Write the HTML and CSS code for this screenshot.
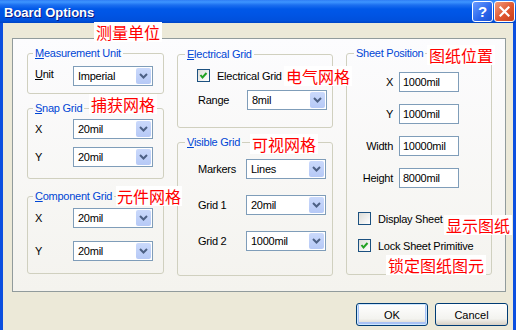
FILE: index.html
```html
<!DOCTYPE html>
<html lang="en">
<head>
	<meta charset="UTF-8">
	<meta name="viewport" content="width=device-width, initial-scale=1.0">
	<title>Board Options</title>
	<link rel="stylesheet" href="styles.css">
</head>
<body>
	<div class="window">
		<div class="titlebar">
			<span class="title">Board Options</span>
			<div class="title-btns">
				<span class="tbtn help">?</span>
				<span class="tbtn close">
					<svg width="11" height="11" viewBox="0 0 11 11"><path d="M1.5 1.5 L9.5 9.5 M9.5 1.5 L1.5 9.5" stroke="#fff" stroke-width="2.2" stroke-linecap="square"/></svg>
				</span>
			</div>
		</div>

		<div class="client">
			<div class="panel">
				<!-- left column -->
				<div class="col">
					<fieldset class="grp grp-unit">
						<legend><u>M</u>easurement Unit</legend>
						<div class="rows rows-left">
							<div class="row row-unit"><label><u>U</u>nit</label><div class="combo"><span class="val">Imperial</span><span class="drop"><svg width="9" height="6" viewBox="0 0 9 6"><path d="M1 1 L4.5 4.5 L8 1" fill="none" stroke="#4D6185" stroke-width="2"/></svg></span></div></div>
						</div>
					</fieldset>

					<fieldset class="grp grp-snap">
						<legend><u>S</u>nap Grid</legend>
						<div class="rows rows-left">
							<div class="row"><label>X</label><div class="combo"><span class="val">20mil</span><span class="drop"><svg width="9" height="6" viewBox="0 0 9 6"><path d="M1 1 L4.5 4.5 L8 1" fill="none" stroke="#4D6185" stroke-width="2"/></svg></span></div></div>
							<div class="row"><label>Y</label><div class="combo"><span class="val">20mil</span><span class="drop"><svg width="9" height="6" viewBox="0 0 9 6"><path d="M1 1 L4.5 4.5 L8 1" fill="none" stroke="#4D6185" stroke-width="2"/></svg></span></div></div>
						</div>
					</fieldset>

					<fieldset class="grp grp-comp">
						<legend><u>C</u>omponent Grid</legend>
						<div class="rows rows-left">
							<div class="row"><label>X</label><div class="combo"><span class="val">20mil</span><span class="drop"><svg width="9" height="6" viewBox="0 0 9 6"><path d="M1 1 L4.5 4.5 L8 1" fill="none" stroke="#4D6185" stroke-width="2"/></svg></span></div></div>
							<div class="row"><label>Y</label><div class="combo"><span class="val">20mil</span><span class="drop"><svg width="9" height="6" viewBox="0 0 9 6"><path d="M1 1 L4.5 4.5 L8 1" fill="none" stroke="#4D6185" stroke-width="2"/></svg></span></div></div>
						</div>
					</fieldset>
				</div>

				<!-- middle column -->
				<div class="col">
					<fieldset class="grp grp-elec">
						<legend><u>E</u>lectrical Grid</legend>
						<div class="rows rows-elec">
							<div class="check-row"><span class="chk"><svg width="11" height="11" viewBox="0 0 11 11"><path d="M2.5 5 L4.5 7.5 L8.5 3" fill="none" stroke="#21A121" stroke-width="2"/></svg></span>Electrical Grid</div>
							<div class="row"><label>Range</label><div class="combo"><span class="val">8mil</span><span class="drop"><svg width="9" height="6" viewBox="0 0 9 6"><path d="M1 1 L4.5 4.5 L8 1" fill="none" stroke="#4D6185" stroke-width="2"/></svg></span></div></div>
						</div>
					</fieldset>

					<fieldset class="grp grp-vis">
						<legend><u>V</u>isible Grid</legend>
						<div class="rows rows-vis">
							<div class="row"><label>Markers</label><div class="combo"><span class="val">Lines</span><span class="drop"><svg width="9" height="6" viewBox="0 0 9 6"><path d="M1 1 L4.5 4.5 L8 1" fill="none" stroke="#4D6185" stroke-width="2"/></svg></span></div></div>
							<div class="row"><label>Grid 1</label><div class="combo"><span class="val">20mil</span><span class="drop"><svg width="9" height="6" viewBox="0 0 9 6"><path d="M1 1 L4.5 4.5 L8 1" fill="none" stroke="#4D6185" stroke-width="2"/></svg></span></div></div>
							<div class="row"><label>Grid 2</label><div class="combo"><span class="val">1000mil</span><span class="drop"><svg width="9" height="6" viewBox="0 0 9 6"><path d="M1 1 L4.5 4.5 L8 1" fill="none" stroke="#4D6185" stroke-width="2"/></svg></span></div></div>
						</div>
					</fieldset>
				</div>

				<!-- right column -->
				<div class="col">
					<fieldset class="grp grp-sheet">
						<legend>Sheet Position</legend>
						<div class="rows rows-sheet">
							<div class="row"><label>X</label><span class="edit">1000mil</span></div>
							<div class="row"><label>Y</label><span class="edit">1000mil</span></div>
							<div class="row"><label>Width</label><span class="edit">10000mil</span></div>
							<div class="row"><label>Height</label><span class="edit">8000mil</span></div>
						</div>
						<div class="checks">
							<div class="check-row"><span class="chk"></span>Display Sheet</div>
							<div class="check-row"><span class="chk"><svg width="11" height="11" viewBox="0 0 11 11"><path d="M2.5 5 L4.5 7.5 L8.5 3" fill="none" stroke="#21A121" stroke-width="2"/></svg></span>Lock Sheet Primitive</div>
						</div>
					</fieldset>
				</div>
			</div>

			<div class="buttons">
				<button class="btn btn-default">OK</button>
				<button class="btn">Cancel</button>
			</div>
		</div>

		<!-- 주석 라벨 -->
		<span class="note n-unit">测量单位</span>
		<span class="note n-snap">捕获网格</span>
		<span class="note n-comp">元件网格</span>
		<span class="note n-elec">电气网格</span>
		<span class="note n-vis">可视网格</span>
		<span class="note n-sheet">图纸位置</span>
		<span class="note n-disp">显示图纸</span>
		<span class="note n-lock">锁定图纸图元</span>
	</div>
</body>
</html>
```

FILE: styles.css
```css
body{
	margin:0;
	font-family:"Liberation Sans", Arial, sans-serif;
	font-size:11px;
	color:#000;
}
.window{
	position:relative;
	width:516px; height:330px;
	background:#ECE9D8;
	overflow:hidden;
}

/* title bar */
.titlebar{
	height:23px;
	display:flex; align-items:center; justify-content:space-between;
	padding:0 1px 0 4px;
	background:linear-gradient(to bottom, #2F7EF5 0, #3D95FF 2px, #1C6FF0 5px, #0058E8 9px, #0055E5 60%, #0050DC 90%, #0044C4 100%);
}
.title{
	color:#fff;
	font-weight:bold;
	font-size:13px;
	text-shadow:1px 1px 0 #0A1883;
	padding-top:1px;
}
.title-btns{
	display:flex; gap:1px;
}
.tbtn{
	width:21px; height:21px;
	box-sizing:border-box;
	border:1px solid #fff;
	border-radius:3px;
	display:flex; align-items:center; justify-content:center;
	color:#fff;
}
.help{
	background:linear-gradient(135deg, #6A9CFF, #2A66EC 60%, #1A50D0);
	font-weight:bold; font-size:15px;
}
.close{
	background:linear-gradient(135deg, #F29C7E, #E0562F 55%, #C6401E);
}

/* client area */
.client{
	height:307px;
	box-sizing:border-box;
	border-left:3px solid #0B4FDF;
	border-right:3px solid #0B4FDF;
	padding:15px 7px 0 9px;
	letter-spacing:-0.25px;
}
.panel{
	height:254px;
	box-sizing:border-box;
	border:1px solid #919B9C;
	background:linear-gradient(to bottom, #FCFCFE, #F4F3EE);
	display:grid;
	grid-template-columns:137px 156px 146px;
	column-gap:13px;
	align-items:start;
	padding:8px 0 0 14px;
}

/* group boxes */
.grp{
	margin:0; padding:0;
	min-width:0;
	box-sizing:border-box;
	border:1px solid #D0D0BF;
	border-radius:3px;
}
.grp legend{
	color:#0046D5;
	line-height:13px;
	padding:0 2px;
	margin-left:7px;
}
.grp-unit legend, .grp-snap legend, .grp-comp legend{
	margin-left:5px;
}
.grp-unit{ height:47px; }
.grp-snap{ height:77px; margin-top:8px; }
.grp-comp{ height:84px; margin-top:11px; }
.grp-elec{ height:80px; margin-top:1px; }
.grp-vis{ height:140px; margin-top:8px; }
.grp-sheet{ height:228px; }

.rows{
	display:flex; flex-direction:column;
}
.row{
	display:flex; align-items:center;
	height:20px;
}
.row label{
	flex:none;
}
.rows-left{ padding:6px 0 0 7px; }
.rows-left label{ width:38px; }
.row-unit label{ margin-top:-5px; }
.grp-snap .rows-left{ padding-top:4px; gap:8px; }
.grp-comp .rows-left{ padding-top:5px; gap:13px; }

.rows-elec{ padding:8px 0 0 19px; gap:8px; }
.rows-elec label{ width:49px; padding-left:1px; }

.rows-vis{ padding:10px 0 0 20px; gap:16px; }
.rows-vis label{ width:48px; }

.rows-sheet{ padding-top:12px; gap:12px; }
.rows-sheet label{ width:46px; margin-right:6px; text-align:right; }

.checks{
	display:flex; flex-direction:column;
	gap:14px;
	margin-top:24px;
	padding-left:11px;
}
.check-row{
	display:flex; align-items:center;
	height:13px;
	gap:7px;
}
.chk{
	width:13px; height:13px;
	box-sizing:border-box;
	border:1px solid #1C5180;
	background:linear-gradient(135deg, #DCDCD7, #FFFFFF);
	display:flex; align-items:center; justify-content:center;
	flex:none;
}

/* combo boxes and edits */
.combo{
	width:80px; height:20px;
	box-sizing:border-box;
	border:1px solid #7F9DB9;
	background:#fff;
	display:flex;
}
.combo .val{
	flex:1;
	padding-left:4px;
	line-height:18px;
}
.drop{
	width:15px;
	margin:1px;
	border-radius:2px;
	background:linear-gradient(to bottom, #CAD9FB, #B6C9F6);
	display:flex; align-items:center; justify-content:center;
}
.edit{
	width:60px; height:20px;
	box-sizing:border-box;
	border:1px solid #7F9DB9;
	background:#fff;
	padding-left:3px;
	line-height:18px;
}

/* bottom buttons */
.buttons{
	display:flex; justify-content:flex-end;
	gap:7px;
	margin-top:11px;
	margin-right:-2px;
}
.btn{
	width:72px; height:23px;
	font-family:inherit; font-size:11px;
	border:1px solid #003C74;
	border-radius:3px;
	background:linear-gradient(to bottom, #FFFFFF, #F3F3EF 70%, #D6D0C5);
	padding:0;
}
.btn + .btn{ width:73px; }
.btn-default{
	box-shadow:inset 0 0 0 1px #CEE7FF, inset 0 -1px 0 2px #A9C2F5;
}

/* red annotations */
.note{
	position:absolute;
	background:#fff;
	color:#FF0000;
	font-family:"Noto Sans CJK SC", sans-serif;
	font-size:16px;
	line-height:20px;
	padding:0 2px;
}
.n-unit{ left:94px; top:22px; }
.n-snap{ left:89px; top:94px; }
.n-comp{ left:116px; top:186px; padding:0 1px; }
.n-elec{ left:284px; top:66px; }
.n-vis{ left:250px; top:134px; }
.n-sheet{ left:427px; top:45px; }
.n-disp{ left:444px; top:215px; }
.n-lock{ left:386px; top:255px; }
```
